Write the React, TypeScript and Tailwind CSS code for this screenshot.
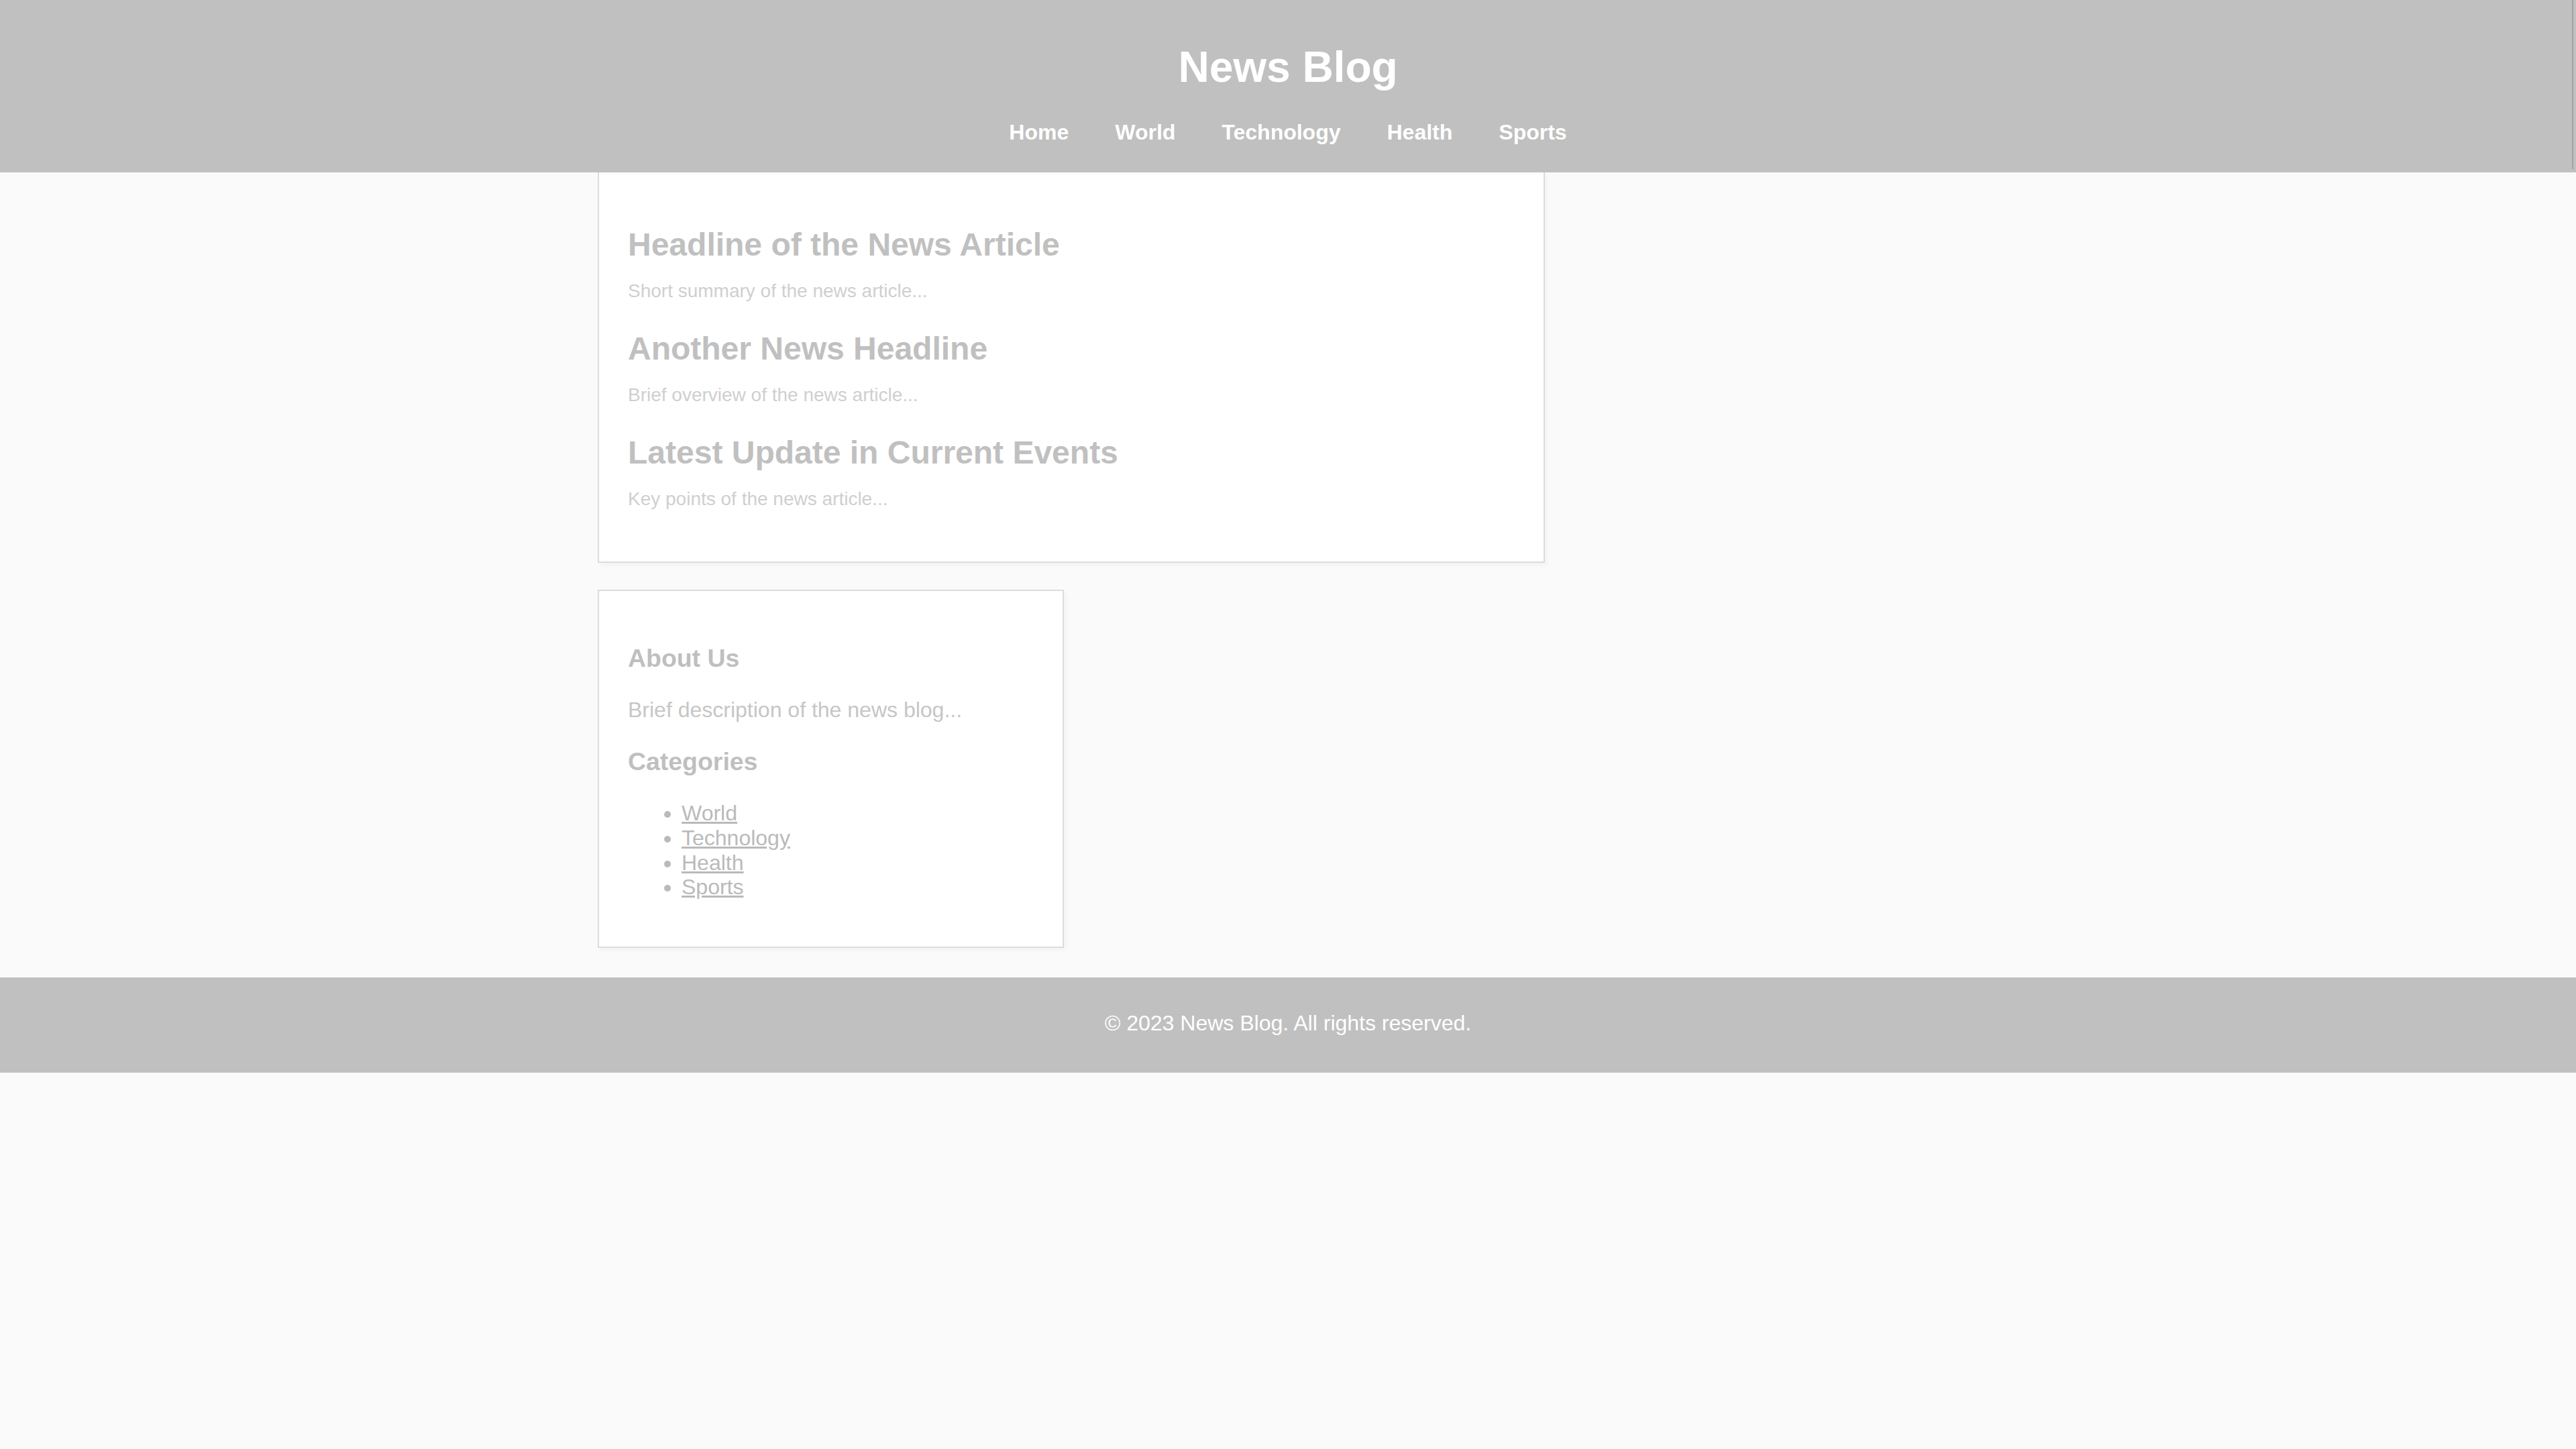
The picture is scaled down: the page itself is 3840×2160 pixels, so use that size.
const navItems = ["Home", "World", "Technology", "Health", "Sports"];

const articles = [
  { title: "Headline of the News Article", summary: "Short summary of the news article..." },
  { title: "Another News Headline", summary: "Brief overview of the news article..." },
  { title: "Latest Update in Current Events", summary: "Key points of the news article..." },
];

const categories = ["World", "Technology", "Health", "Sports"];

export default function App() {
  return (
    <div className="min-h-screen bg-[#fafafa] font-['Liberation_Sans',Arial,sans-serif]">
      {/* Header */}
      <header className="relative bg-[#c0c0c0] text-white text-center pt-[63px] pb-[41px]">
        <h1 className="text-[64px] font-bold leading-[74px] mb-[42px]">News Blog</h1>
        <nav>
          <ul className="flex justify-center gap-[69px] text-[32px] font-bold leading-[37px]">
            {navItems.map((item) => (
              <li key={item}>
                <a href="#">{item}</a>
              </li>
            ))}
          </ul>
        </nav>
        <span className="absolute right-[4px] top-0 h-[252px] w-[2px] bg-[#a3a3a3]" />
      </header>

      {/* Content */}
      <div className="mx-auto w-[2058px] flex flex-col items-start gap-[40px] pb-[44px]">
        <main className="w-[1412px] bg-white border-2 border-t-0 border-[#dcdcdc] shadow-[3px_4px_6px_rgba(0,0,0,0.03)] px-[43px] pt-[80px] pb-[77px]">
          <div className="flex flex-col gap-[42px]">
            {articles.map((a) => (
              <article key={a.title}>
                <h2 className="text-[48px] font-bold leading-[55px] text-[#c0c0c0]">{a.title}</h2>
                <p className="mt-[26px] text-[28px] leading-[32px] text-[#cfcfcf]">{a.summary}</p>
              </article>
            ))}
          </div>
        </main>

        <aside className="w-[695px] bg-white border-2 border-[#dcdcdc] shadow-[3px_4px_6px_rgba(0,0,0,0.03)] px-[43px] pt-[79px] pb-[70px]">
          <h3 className="text-[37.44px] font-bold leading-[43px] text-[#bfbfbf]">About Us</h3>
          <p className="mt-[37px] text-[32px] leading-[37px] text-[#c6c6c6]">
            Brief description of the news blog...
          </p>
          <h3 className="mt-[37px] text-[37.44px] font-bold leading-[43px] text-[#bfbfbf]">Categories</h3>
          <ul className="mt-[37px] pl-[80px] list-disc text-[32px] leading-[36.8px] text-[#bababa]">
            {categories.map((c) => (
              <li key={c}>
                <a href="#" className="underline">
                  {c}
                </a>
              </li>
            ))}
          </ul>
        </aside>
      </div>

      {/* Footer */}
      <footer className="bg-[#c0c0c0] text-white text-center pt-[50px] pb-[55px]">
        <p className="text-[32px] leading-[37px]">© 2023 News Blog. All rights reserved.</p>
      </footer>
    </div>
  );
}
